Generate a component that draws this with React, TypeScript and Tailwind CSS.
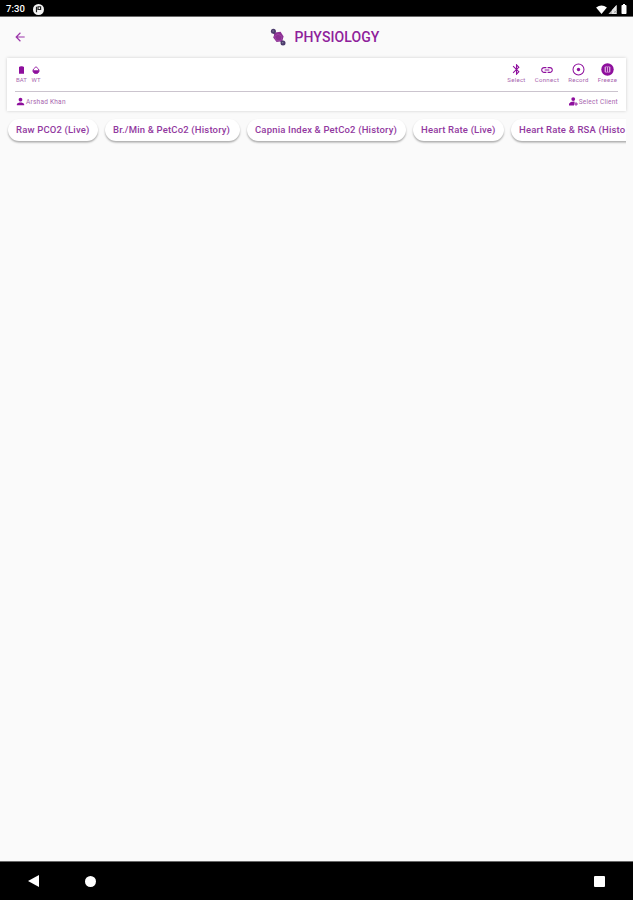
import type { ReactNode } from "react";
import { MdArrowBack, MdBatteryFull, MdBluetooth, MdLink, MdPerson } from "react-icons/md";

type Action = { label: string; icon: ReactNode; width: string };

const ACTIONS: Action[] = [
  { label: "Select", icon: <MdBluetooth className="size-[13px]" />, width: "w-[20px]" },
  { label: "Connect", icon: <MdLink className="size-[14px]" />, width: "w-[26px]" },
  { label: "Record", icon: <RecordIcon />, width: "w-[22px]" },
  { label: "Freeze", icon: <FreezeIcon />, width: "w-[21px]" },
];

const CHARTS = [
  { label: "Raw PCO2 (Live)", width: "w-[90px]" },
  { label: "Br./Min & PetCo2 (History)", width: "w-[135px]" },
  { label: "Capnia Index & PetCo2 (History)", width: "w-[159px]" },
  { label: "Heart Rate (Live)", width: "w-[91px]" },
  { label: "Heart Rate & RSA (Histo", width: "w-[141px]" },
];

function RecordIcon() {
  return (
    <svg viewBox="0 0 14 14" className="size-[13px]" fill="none">
      <circle cx="7" cy="7" r="5.9" stroke="currentColor" strokeWidth="1.1" />
      <circle cx="7" cy="7" r="1.8" fill="currentColor" />
    </svg>
  );
}

function FreezeIcon() {
  return (
    <svg viewBox="0 0 13 13" className="size-[13px]">
      <circle cx="6.5" cy="6.5" r="6.2" fill="currentColor" />
      <rect x="3.6" y="3.6" width="5.8" height="5.8" rx="1" fill="#d7a3dc" />
      <path d="M5.5 4.2v4.6M7.5 4.2v4.6" stroke="currentColor" strokeWidth="1" />
    </svg>
  );
}

function Logo() {
  return (
    <svg viewBox="0 0 16 18" className="h-[18px] w-4">
      <path d="M3 3.5 13 15" stroke="#5c4378" strokeWidth="2" />
      <path d="M5 4.6 10.6 3.7 13.6 8.4 12.2 13.2 6.6 14 3.2 9.6z" fill="#8b2f93" />
      <path d="M4.5 8.5 8 6l4 2.5-1 4-4.5 0z" fill="none" stroke="#a34cab" strokeWidth=".7" />
      <circle cx="3.4" cy="3.3" r="2.5" fill="#4c3b6c" />
      <circle cx="13" cy="15" r="2.5" fill="#4c3b6c" />
      <circle cx="3.1" cy="3" r=".8" fill="#8583a1" />
      <circle cx="12.7" cy="14.7" r=".8" fill="#8583a1" />
    </svg>
  );
}

function StatusBar() {
  return (
    <div className="flex h-[17px] shrink-0 items-center border-b border-[#686868] bg-black pt-[2px] pr-[3px] pl-[6px] text-white">
      <span className="w-[27px] text-[9.5px] font-medium tracking-[0.1px]">7:30</span>
      <svg viewBox="0 0 12 12" className="size-[11px]">
        <circle cx="6" cy="6" r="6" fill="#f4f4f4" />
        <path d="M3.8 3v6M5.5 3h2.8v3H5.5z" fill="none" stroke="#222" strokeWidth="1.3" />
      </svg>
      <div className="ml-auto flex items-center">
        <svg viewBox="0 0 12 10" className="h-[9px] w-[11px]" fill="#fff">
          <path d="M0 2.8Q6-1.6 12 2.8L6 10z" />
        </svg>
        <svg viewBox="0 0 11 10" className="h-[9px] w-[11px]">
          <path d="M1 10 10 0v10z" fill="#bbb" />
          <path d="M5 10V5.6L10 0v10z" fill="#e8e8e8" />
          <path d="m7 6 3 3M10 6 7 9" stroke="#777" strokeWidth=".6" />
        </svg>
        <MdBatteryFull className="size-[12px]" />
      </div>
    </div>
  );
}

function DeviceCard() {
  return (
    <section className="mx-[7px] mt-[1px] h-[53px] shrink-0 bg-white px-2 shadow-[0_0_3px_rgba(0,0,0,0.18)]">
      <div className="flex h-[34px] justify-between border-b-[1.5px] border-[#cbc4ce] pt-[5px]">
        <div className="flex text-[6px] leading-[7px] text-[#a765ae]">
          <div className="flex w-[13px] flex-col items-center">
            <span className="flex h-[13px] items-center">
              <svg viewBox="0 0 6 9" className="h-2 w-[5px]" fill="#8e0f9d">
                <path d="M0 .6h1.5V0h3v.6H6V9H0z" />
              </svg>
            </span>
            <span>BAT</span>
          </div>
          <div className="ml-[2px] flex w-[12px] flex-col items-center">
            <span className="flex h-[13px] items-center">
              <svg viewBox="0 0 9 9" className="size-2" fill="none">
                <path d="M4.5.8 7.3 3.4a3.4 3.4 0 1 1-5.6 0z" stroke="#8e0f9d" />
                <path d="M1 4.8h7a3.5 3.5 0 0 1-7 0z" fill="#8e0f9d" />
              </svg>
            </span>
            <span>WT</span>
          </div>
        </div>
        <div className="flex gap-[7.5px] text-[6px] leading-[7px] text-[#a765ae]">
          {ACTIONS.map((action) => (
            <button key={action.label} className={`flex flex-col items-center ${action.width}`}>
              <span className="flex h-[13px] items-center text-[#8e0f9d]">{action.icon}</span>
              <span className="tracking-[0.3px]">{action.label}</span>
            </button>
          ))}
        </div>
      </div>
      <div className="flex h-[19px] items-center justify-between text-[6.5px] leading-[8px] tracking-[0.25px] text-[#a765ae]">
        <div className="flex items-center">
          <MdPerson className="size-[11px] text-[#8e0f9d]" />
          <span>Arshad Khan</span>
        </div>
        <div className="flex items-center">
          <svg viewBox="0 0 10 10" className="mr-px size-[9px]" fill="#8e0f9d">
            <circle cx="4.7" cy="2.3" r="2.1" />
            <path d="M0 9.5V7.6Q1.5 5 5 5l1.4.3L5.5 9.5z" />
            <path d="M7.8 5.8v4M5.9 7.8h4" stroke="#8e0f9d" strokeWidth="1" />
          </svg>
          <span>Select Client</span>
        </div>
      </div>
    </section>
  );
}

export default function App() {
  return (
    <div className="flex h-[900px] w-[633px] flex-col overflow-hidden bg-[#fafafa] font-['Roboto',sans-serif]">
      <StatusBar />

      <header className="grid h-10 shrink-0 grid-cols-[1fr_auto_1fr] items-center px-[13px]">
        <button aria-label="Back">
          <MdArrowBack className="size-[14px] text-[#9c35a9]" />
        </button>
        <div className="flex items-center gap-2 pl-[17px]">
          <Logo />
          <h1 className="text-[14px] font-medium tracking-[0.1px] text-[#8e219b]">PHYSIOLOGY</h1>
        </div>
      </header>

      <DeviceCard />

      <nav className="mr-[7px] flex shrink-0 gap-[7px] overflow-hidden pt-[8px] pb-[5px] pl-[8px]">
        {CHARTS.map((chart) => (
          <button
            key={chart.label}
            className={`h-[22px] shrink-0 rounded-full bg-white pl-2 text-left text-[9.5px] font-medium tracking-[0.17px] whitespace-nowrap text-[#9239a0] shadow-[0_1.5px_2px_rgba(0,0,0,0.32)] ${chart.width}`}
          >
            {chart.label}
          </button>
        ))}
      </nav>

      <main className="flex-1" />

      <footer className="flex h-[39px] shrink-0 items-center border-t border-[#686868] bg-black pl-[28px] text-white">
        <svg viewBox="0 0 12 12" className="size-3" fill="currentColor">
          <path d="M0 6 11 0v12z" />
        </svg>
        <span className="ml-[45px] size-[11px] rounded-full bg-white" />
        <span className="mr-[28px] ml-auto size-[11px] rounded-[1px] bg-white" />
      </footer>
    </div>
  );
}
